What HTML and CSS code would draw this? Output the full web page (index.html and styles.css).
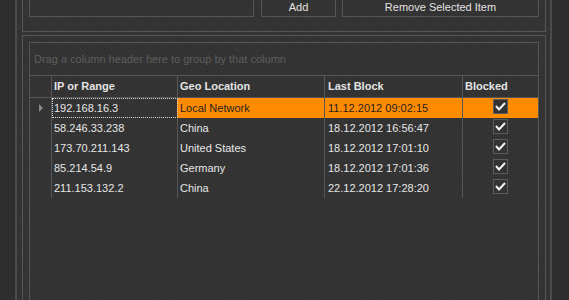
FILE: index.html
```html
<!DOCTYPE html>
<html lang="en">
<head>
    <meta charset="UTF-8">
    <meta name="viewport" content="width=device-width, initial-scale=1.0">
    <title>Blocked Addresses</title>

    <link rel="stylesheet" href="styles.css">
</head>
<body>

    <div class="shell">

        <!-- Add / remove bar -->
        <div class="group top-group">
            <div class="input-row">
                <div class="text-box"></div>
                <button class="btn btn-add">Add</button>
                <button class="btn btn-remove">Remove Selected Item</button>
            </div>
        </div>

        <!-- Blocked list -->
        <div class="group grid-group">
            <div class="grid">
                <div class="group-panel">Drag a column header here to group by that column</div>

                <div class="grid-head">
                    <div class="cell indicator"></div>
                    <div class="cell">IP or Range</div>
                    <div class="cell">Geo Location</div>
                    <div class="cell date">Last Block</div>
                    <div class="cell last">Blocked</div>
                </div>

                <div class="grid-row selected">
                    <div class="cell indicator"><span class="arrow"></span></div>
                    <div class="cell ip focused">192.168.16.3</div>
                    <div class="cell">Local Network</div>
                    <div class="cell date">11.12.2012 09:02:15</div>
                    <div class="cell last check-cell"><span class="check"><svg viewBox="0 0 13 13" width="13" height="13"><path d="M2 6 L5 9.5 L11 3" /></svg></span></div>
                </div>
                <div class="grid-row">
                    <div class="cell indicator"></div>
                    <div class="cell ip">58.246.33.238</div>
                    <div class="cell">China</div>
                    <div class="cell date">18.12.2012 16:56:47</div>
                    <div class="cell last check-cell"><span class="check"><svg viewBox="0 0 13 13" width="13" height="13"><path d="M2 6 L5 9.5 L11 3" /></svg></span></div>
                </div>
                <div class="grid-row">
                    <div class="cell indicator"></div>
                    <div class="cell ip">173.70.211.143</div>
                    <div class="cell">United States</div>
                    <div class="cell date">18.12.2012 17:01:10</div>
                    <div class="cell last check-cell"><span class="check"><svg viewBox="0 0 13 13" width="13" height="13"><path d="M2 6 L5 9.5 L11 3" /></svg></span></div>
                </div>
                <div class="grid-row">
                    <div class="cell indicator"></div>
                    <div class="cell ip">85.214.54.9</div>
                    <div class="cell">Germany</div>
                    <div class="cell date">18.12.2012 17:01:36</div>
                    <div class="cell last check-cell"><span class="check"><svg viewBox="0 0 13 13" width="13" height="13"><path d="M2 6 L5 9.5 L11 3" /></svg></span></div>
                </div>
                <div class="grid-row">
                    <div class="cell indicator"></div>
                    <div class="cell ip">211.153.132.2</div>
                    <div class="cell">China</div>
                    <div class="cell date">22.12.2012 17:28:20</div>
                    <div class="cell last check-cell"><span class="check"><svg viewBox="0 0 13 13" width="13" height="13"><path d="M2 6 L5 9.5 L11 3" /></svg></span></div>
                </div>
            </div>
        </div>

    </div>

</body>
</html>
```

FILE: styles.css
```css
html, body {
    height: 300px;
}

body {
    margin: 0;
    overflow: hidden;
    background-color: #2e2e2e;
    font-family: "Liberation Sans", Arial, sans-serif;
    font-size: 11px;
    color: #e6e6e6;
}

/* Outer window frame */
.shell {
    margin: -6px 0 0 15px;
    width: 524px;
    height: 306px;
    padding: 0 4px 0 5px;
    overflow: hidden;
    border-left: 2px solid #4c4c4c;
    border-right: 2px solid #4c4c4c;
    background-color: #323232;
    background-image: repeating-linear-gradient(45deg, rgba(255, 255, 255, 0.018) 0 1px, transparent 1px 3px);
}

.group {
    border: 1px solid #565656;
}

/* Top bar */
.top-group {
    padding: 1px 6px 14px;
}

.input-row {
    display: flex;
    height: 21px;
}

.text-box {
    width: 225px;
    border: 1px solid #565656;
    box-sizing: border-box;
}

.btn {
    height: 21px;
    padding: 1px 0 0;
    background: transparent;
    border: 1px solid #565656;
    color: #e2e2e2;
    font-family: "Liberation Sans", Arial, sans-serif;
    font-size: 11px;
    box-sizing: border-box;
}

.btn-add {
    width: 75px;
    margin-left: 7px;
}

.btn-remove {
    width: 197px;
    margin-left: 6px;
}

/* Grid */
.grid-group {
    margin-top: 3px;
    padding: 6px 6px 0;
    height: 280px;
}

.grid {
    height: 280px;
    border: 1px solid #565656;
}

.group-panel {
    height: 32px;
    line-height: 32px;
    padding-left: 4px;
    color: #5e5e5e;
}

.grid-head,
.grid-row {
    display: grid;
    grid-template-columns: 22px 126px 147px 138px 75px;
}

.grid-head {
    height: 23px;
    border-top: 1px solid #565656;
    border-bottom: 1px solid #565656;
    box-sizing: border-box;
    font-weight: bold;
    color: #e4e4e4;
}

.grid-head .cell {
    line-height: 21px;
}

.grid-row {
    height: 20px;
}

.cell {
    padding-left: 2px;
    line-height: 20px;
    white-space: nowrap;
    overflow: hidden;
    border-right: 1px solid #565656;
}

.cell.date {
    padding-left: 3px;
}

.cell.last {
    border-right: none;
}

.indicator {
    display: flex;
    align-items: center;
    padding-left: 9px;
}

.arrow {
    width: 0;
    height: 0;
    border-left: 4px solid #888888;
    border-top: 4px solid transparent;
    border-bottom: 4px solid transparent;
    margin-top: -1px;
}

/* Selected row */
.selected .cell {
    background-color: #ff8c00;
    color: #1f1f1f;
}

.selected .indicator {
    background: none;
}

.selected .focused {
    background: none;
    color: #e6e6e6;
    outline: 1px dotted #d8d8d8;
    outline-offset: -1px;
    border-right-color: #ff8c00;
}

/* Checkboxes */
.check-cell {
    display: flex;
    justify-content: center;
    align-items: flex-start;
    padding: 1px 1px 0 0;
}

.check {
    width: 15px;
    height: 15px;
    border: 1px solid #5c5c5c;
    box-sizing: border-box;
    background-color: #333333;
    display: flex;
}

.check path {
    fill: none;
    stroke: #f2f2f2;
    stroke-width: 2;
}
```
